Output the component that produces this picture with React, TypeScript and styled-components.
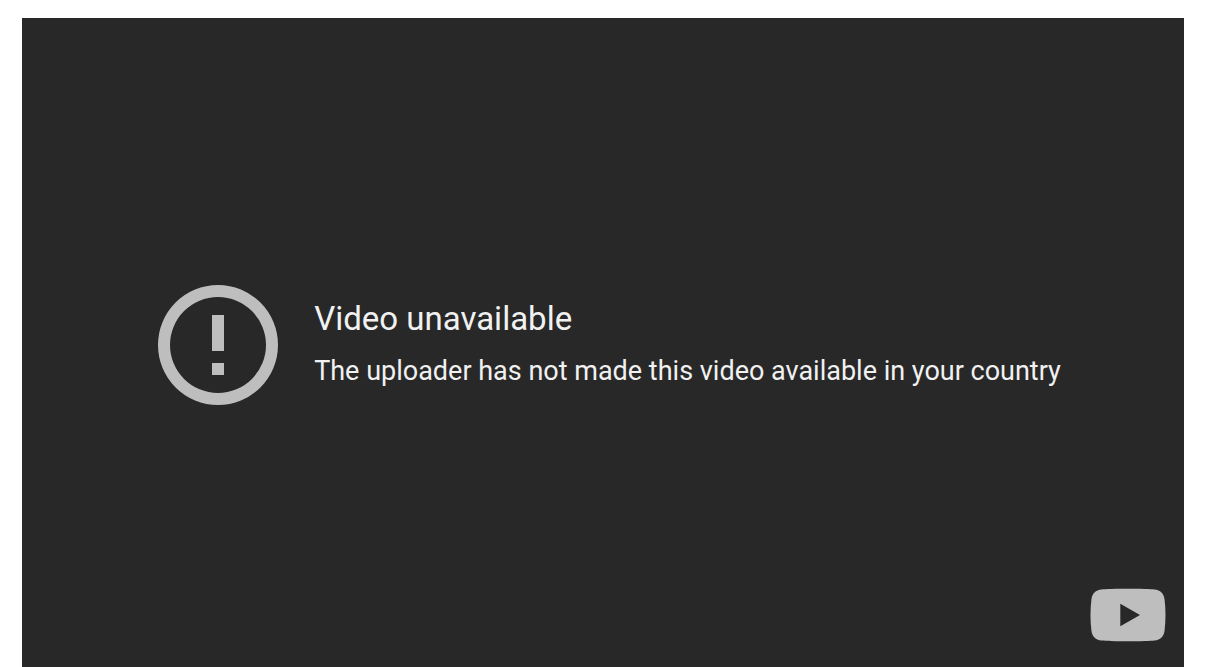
import React from "react";
import styled, { createGlobalStyle } from "styled-components";

const GlobalStyle = createGlobalStyle`
  * { box-sizing: border-box; }
  body { margin: 0; background: #fff; font-family: Roboto, "Liberation Sans", sans-serif; }
`;

const Page = styled.main`
  display: flex;
  min-height: 100vh;
  padding: 18px 21px 0 22px;
`;

const Player = styled.section`
  display: flex;
  flex: 1;
  flex-direction: column;
  background: #282828;
`;

const Message = styled.div`
  display: flex;
  flex: 1;
  align-items: center;
  justify-content: center;
  gap: 36px;
  padding: 84px 23px 0 36px;
`;

const AlertIcon = styled.svg`
  flex: none;
  width: 120px;
  height: 120px;
  fill: #bebebe;
`;

const Copy = styled.div`
  color: #f1f1f1;
`;

const Title = styled.h1`
  margin: 0 0 16px;
  font-size: 33px;
  font-weight: 400;
  line-height: 36px;
`;

const Reason = styled.p`
  margin: 0;
  font-size: 27px;
  line-height: 36px;
`;

const Footer = styled.footer`
  display: flex;
  justify-content: flex-end;
  padding: 0 18px 25px;
`;

const LogoLink = styled.a`
  display: block;
`;

const Logo = styled.svg`
  display: block;
  width: 76px;
  height: 54px;
  fill: #bebebe;
`;

export default function App() {
  return (
    <>
      <GlobalStyle />
      <Page>
        <Player aria-label="Video player">
          <Message role="alert">
            <AlertIcon viewBox="0 0 120 120" aria-hidden="true">
              <path
                fillRule="evenodd"
                d="M60 0a60 60 0 1 0 0 120A60 60 0 0 0 60 0Zm0 12a48 48 0 1 1 0 96 48 48 0 0 1 0-96ZM54 30h12v36H54ZM54 78h12v12H54Z"
              />
            </AlertIcon>
            <Copy>
              <Title>Video unavailable</Title>
              <Reason>The uploader has not made this video available in your country</Reason>
            </Copy>
          </Message>
          <Footer>
            <LogoLink href="#" aria-label="Watch on YouTube">
              <Logo viewBox="0 0 76 54" aria-hidden="true">
                <path
                  fillRule="evenodd"
                  d="M38 .7C51 .7 60 1 64.500 1.500C70.500 2.100 73.800 5.500 74.600 11.500C75.800 22 75.800 32.400 74.600 42.500C73.800 48.500 70.500 51.900 64.500 52.500C60 53 51 53.300 38 53.300C25 53.300 16 53 11.500 52.500C5.500 51.900 2.200 48.500 1.400 42.500C.2 32.400 .2 22 1.400 11.500C2.200 5.500 5.500 2.100 11.500 1.500C16 1 25 .7 38 .7ZM30.300 15.700V38.300L50 27Z"
                />
              </Logo>
            </LogoLink>
          </Footer>
        </Player>
      </Page>
    </>
  );
}
